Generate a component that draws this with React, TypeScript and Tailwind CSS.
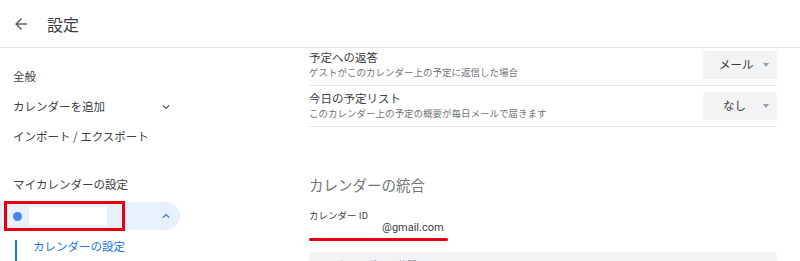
import { ReactNode } from "react";

const font = { fontFamily: '"Noto Sans CJK JP", "Noto Sans", Roboto, sans-serif' };

function ArrowBack() {
  return (
    <svg width="18" height="18" viewBox="0 0 24 24" fill="#5f6368">
      <path d="M20 11H7.83l5.59-5.59L12 4l-8 8 8 8 1.41-1.41L7.83 13H20v-2z" />
    </svg>
  );
}

function Chevron({ up, color }: { up?: boolean; color: string }) {
  return (
    <svg width="14" height="14" viewBox="0 0 24 24" fill={color} className={up ? "rotate-180" : ""}>
      <path d="M7.41 8.59 12 13.17l4.59-4.58L18 10l-6 6-6-6 1.41-1.41z" />
    </svg>
  );
}

function NavItem({ children, right }: { children: ReactNode; right?: ReactNode }) {
  return (
    <div className="flex h-[30px] w-[180px] items-center justify-between pl-[13px] pr-[7px] text-[11.5px] text-[#3c4043]">
      <span>{children}</span>
      {right}
    </div>
  );
}

function Select({ label, pad }: { label: string; pad: string }) {
  return (
    <div className={`flex h-[28px] w-[74px] items-center rounded-[4px] bg-[#f1f3f4] text-[11.5px] text-[#3c4043] ${pad}`}>
      <span className="flex-1">{label}</span>
      <span className="mr-[8px] h-0 w-0 border-x-[3.5px] border-t-[4px] border-x-transparent border-t-[#9aa0a6]" />
    </div>
  );
}

function SettingRow({ title, sub, select }: { title: string; sub: string; select: ReactNode }) {
  return (
    <div className="flex h-[41px] items-center justify-between border-b border-[#e3e5e8]">
      <div className="flex flex-col">
        <span className="text-[11.5px] leading-[15px] text-[#3c4043]">{title}</span>
        <span className="text-[9.5px] leading-[15px] text-[#70757a]">{sub}</span>
      </div>
      {select}
    </div>
  );
}

export default function App() {
  return (
    <div className="h-[261px] w-[800px] overflow-hidden bg-white" style={font}>
      <header className="flex h-[48px] items-center border-b border-[#e0e0e0]">
        <div className="ml-[12px] flex w-[35px] items-center">
          <ArrowBack />
        </div>
        <span className="text-[16px] text-[#3c4043]">設定</span>
      </header>

      <div className="flex">
        <aside className="w-[309px] shrink-0 pt-[14px]">
          <NavItem>全般</NavItem>
          <NavItem right={<Chevron color="#3c4043" />}>カレンダーを追加</NavItem>
          <NavItem>インポート / エクスポート</NavItem>
          <div className="mt-[18px]">
            <NavItem>マイカレンダーの設定</NavItem>
          </div>
          <div className="relative mt-[2px] flex h-[28px] w-[180px] items-center rounded-r-full bg-[#e8f0fe] pl-[13px] pr-[7px]">
            <span className="h-[9px] w-[9px] rounded-full bg-[#4285f4]" />
            <span className="ml-[7px] h-[18px] w-[78px] bg-white" />
            <span className="ml-auto flex">
              <Chevron up color="#1a73e8" />
            </span>
            <div className="absolute left-[4px] top-[-1px] h-[30px] w-[121px] border-[3px] border-[#e60012]" />
          </div>
          <div className="mt-[2px] flex h-[30px] items-center">
            <span className="ml-[15px] h-[30px] w-[2px] translate-y-[8px] bg-[#1a73e8]" />
            <span className="ml-[16px] text-[11.5px] text-[#1a73e8]">カレンダーの設定</span>
          </div>
        </aside>

        <main className="mt-[-3px] w-[468px]">
          <SettingRow
            title="予定への返答"
            sub="ゲストがこのカレンダー上の予定に返信した場合"
            select={<Select label="メール" pad="pl-[16px]" />}
          />
          <SettingRow
            title="今日の予定リスト"
            sub="このカレンダー上の予定の概要が毎日メールで届きます"
            select={<Select label="なし" pad="pl-[20px]" />}
          />
          <h2 className="mt-[48px] text-[14.5px] leading-[20px] text-[#70757a]">カレンダーの統合</h2>
          <div className="mt-[14px] text-[9.5px] leading-[12px] text-[#3c4043]">カレンダー ID</div>
          <div
            className="pl-[73px] text-[11px] leading-[13px] text-[#3c4043]"
            style={{ fontFamily: "Roboto, sans-serif" }}
          >
            @gmail.com
          </div>
          <div className="mt-[4px] h-[3px] w-[139px] rounded-full bg-[#e60012]" />
          <div className="mt-[11px] h-[30px] rounded-[4px] bg-[#f1f3f4] px-[8px] pt-[5px] text-[10px] text-[#5f6368]">
            このカレンダーの公開URL
          </div>
        </main>
      </div>
    </div>
  );
}
